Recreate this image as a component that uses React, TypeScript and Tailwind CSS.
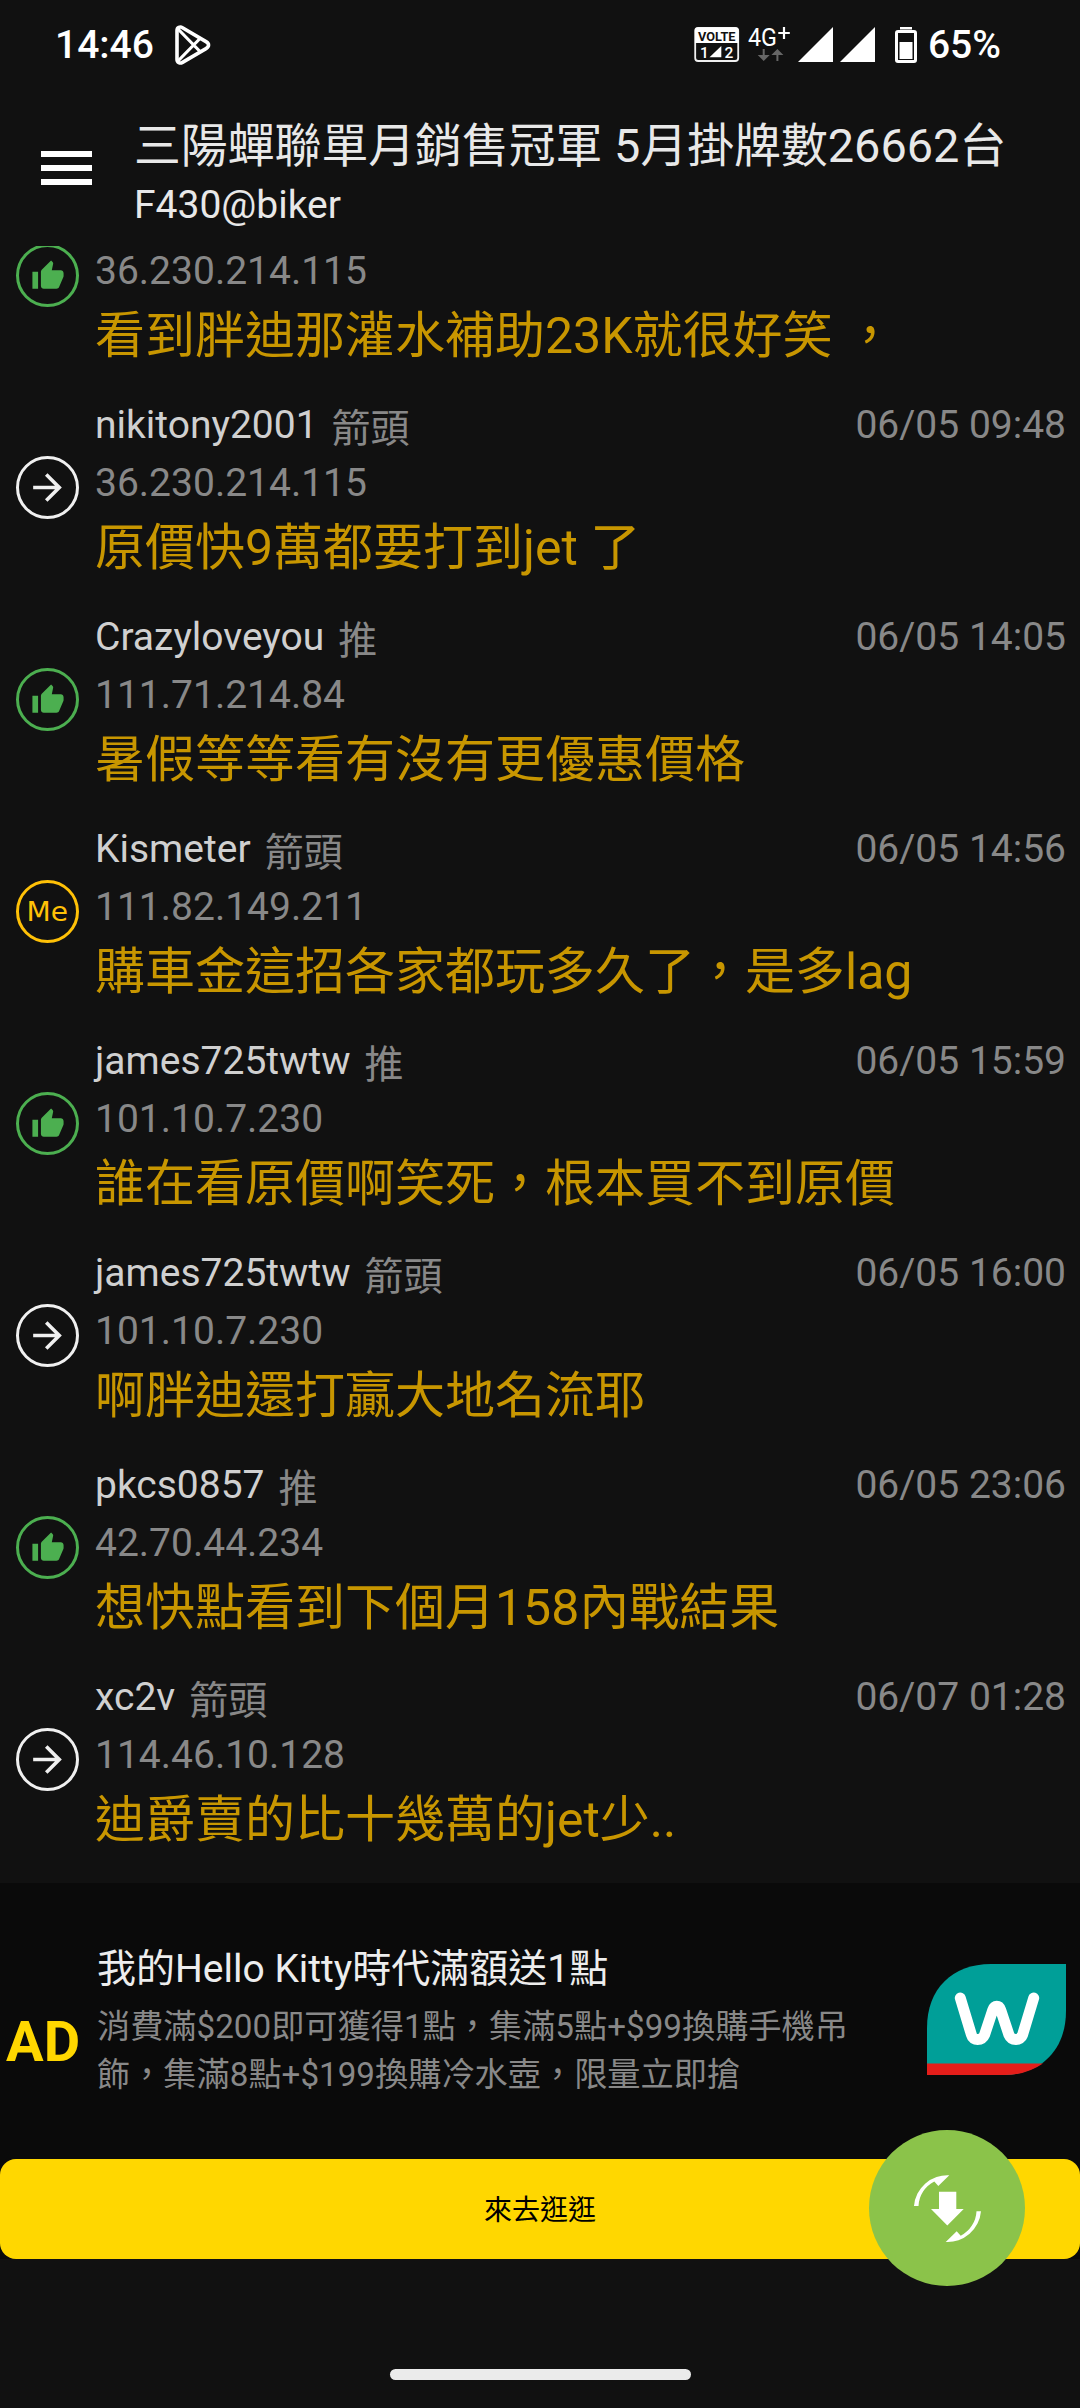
import { MdArrowForward, MdThumbUp } from 'react-icons/md';

type CommentType = 'push' | 'arrow' | 'me';

interface Comment {
  user: string;
  label: string;
  type: CommentType;
  ip: string;
  time: string;
  text: string;
}

const comments: Comment[] = [
  { user: 'nikitony2001', label: '推', type: 'push', ip: '36.230.214.115', time: '06/05 09:48', text: '看到胖迪那灌水補助23K就很好笑 ，' },
  { user: 'nikitony2001', label: '箭頭', type: 'arrow', ip: '36.230.214.115', time: '06/05 09:48', text: '原價快9萬都要打到jet 了' },
  { user: 'Crazyloveyou', label: '推', type: 'push', ip: '111.71.214.84', time: '06/05 14:05', text: '暑假等等看有沒有更優惠價格' },
  { user: 'Kismeter', label: '箭頭', type: 'me', ip: '111.82.149.211', time: '06/05 14:56', text: '購車金這招各家都玩多久了，是多lag' },
  { user: 'james725twtw', label: '推', type: 'push', ip: '101.10.7.230', time: '06/05 15:59', text: '誰在看原價啊笑死，根本買不到原價' },
  { user: 'james725twtw', label: '箭頭', type: 'arrow', ip: '101.10.7.230', time: '06/05 16:00', text: '啊胖迪還打贏大地名流耶' },
  { user: 'pkcs0857', label: '推', type: 'push', ip: '42.70.44.234', time: '06/05 23:06', text: '想快點看到下個月158內戰結果' },
  { user: 'xc2v', label: '箭頭', type: 'arrow', ip: '114.46.10.128', time: '06/07 01:28', text: '迪爵賣的比十幾萬的jet少..' },
];

function StatusBar() {
  return (
    <div className="flex h-[90px] items-center pl-[55px] pr-[79px] text-[39px] font-medium leading-[90px] text-white">
      <span>14:46</span>
      <svg className="ml-[20px]" width="38" height="40" viewBox="0 0 38 40" fill="none" stroke="white" strokeWidth="3.6" strokeLinejoin="round">
        <path d="M3 5.5C3 2.500 6 1.200 8.500 2.700L32 16.600C35.400 18.600 35.400 21.600 32 23.600L8.500 37.400C6 38.800 3 37.500 3 34.500Z" />
        <path d="M4 4L26.500 27M4 36L26.500 13" strokeWidth="3.2" />
      </svg>
      <div className="ml-auto flex items-center">
        <svg width="182" height="40" viewBox="695 25 182 40">
          <rect x="696.2" y="27.8" width="43" height="33.2" rx="3" fill="none" stroke="#f0f0f0" strokeWidth="1.8" />
          <path d="M696 30q0-2.500 2.500-2.500h38.500q2.500 0 2.500 2.500v13h-43.500z" fill="white" />
          <text x="699" y="40.500" fontSize="12" fontWeight="700" fill="#111" textLength="37.500" lengthAdjust="spacingAndGlyphs">VOLTE</text>
          <text x="701" y="57.500" fontSize="15.500" fill="white">1</text>
          <text x="725.500" y="57.500" fontSize="15.500" fill="white">2</text>
          <path d="M710.500 57.300L722.300 46v11.300z" fill="white" />
          <text x="749" y="46" fontSize="26.500" fontWeight="400" fill="white" textLength="29" lengthAdjust="spacingAndGlyphs">4G</text>
          <path d="M785 27v12M779.300 33h11.500" stroke="white" strokeWidth="2.200" />
          <path d="M763.700 49h2v6h5l-6 6-6-6h5zM777.400 61h2v-6h5l-6-6-6 6h5z" fill="#666" />
          <path d="M799 62L834 27v35zM841 62L876 27v35z" fill="white" />
        </svg>
        <svg className="ml-[19px]" width="22" height="40" viewBox="0 0 22 40">
          <path d="M5 2h12v2.500H5z" fill="white" />
          <rect x="1.500" y="6.500" width="19" height="30" rx="1.500" fill="none" stroke="white" strokeWidth="3" />
          <rect x="4.500" y="17" width="13" height="17" fill="white" />
        </svg>
        <span className="ml-[11px]">65%</span>
      </div>
    </div>
  );
}

function CommentIcon({ type }: { type: CommentType }) {
  if (type === 'push') {
    return (
      <div className="mt-[60px] flex size-[63px] shrink-0 items-center justify-center rounded-full border-3 border-[#4caf50] text-[#4caf50]">
        <MdThumbUp size={34} />
      </div>
    );
  }
  if (type === 'me') {
    return (
      <div className="mt-[60px] flex size-[63px] shrink-0 items-center justify-center rounded-full border-3 border-[#ffc107] font-['DejaVu_Sans',sans-serif] text-[26px] leading-none text-[#ffc107]">
        <span className="scale-x-108">Me</span>
      </div>
    );
  }
  return (
    <div className="mt-[60px] flex size-[63px] shrink-0 items-center justify-center rounded-full border-3 border-[#f0f0f0] text-[#f0f0f0]">
      <MdArrowForward size={43} />
    </div>
  );
}

function CommentRow({ comment }: { comment: Comment }) {
  return (
    <li className="flex h-[212px] shrink-0 pl-4 pr-[14px]">
      <CommentIcon type={comment.type} />
      <div className="ml-4 min-w-0 flex-1 whitespace-nowrap">
        <div className="flex text-[39px] leading-[58px]">
          <span className="text-[#d0d0d0]">{comment.user}</span>
          <span className="ml-[14px] mt-1 h-[54px] text-[#888]">{comment.label}</span>
          <span className="ml-auto text-[#888]">{comment.time}</span>
        </div>
        <p className="text-[39px] leading-[58px] text-[#888]">{comment.ip}</p>
        <p className="text-[50px] leading-[73px] text-[#c89600]">{comment.text}</p>
      </div>
    </li>
  );
}

function AdBanner() {
  return (
    <section className="bg-[#0a0a0a]">
      <div className="flex h-[276px]">
        <span className="w-[97px] pl-[6px] pt-[126px] text-[56px] font-bold leading-[66px] text-[#ffd700]">AD</span>
        <div className="w-[780px] pt-[58px]">
          <h2 className="text-[39px] leading-[56px] text-[#ededed]">我的Hello Kitty時代滿額送1點</h2>
          <p className="mt-[6px] text-[33.2px] leading-12 text-[#888]">
            消費滿$200即可獲得1點，集滿5點+$99換購手機吊
            <br />
            飾，集滿8點+$199換購冷水壺，限量立即搶
          </p>
        </div>
        <svg className="ml-auto mr-[14px] mt-[81px]" width="139" height="111" viewBox="0 0 139 111">
          <path d="M0 111V64C0 25 25 0 64 0H139V47C139 86 114 111 75 111Z" fill="#009f98" />
          <path d="M0 99.500H116Q99 111 78 111H0Z" fill="#e41e1a" />
          <path d="M33.300 34L44.500 71C46 77 55 77 57.500 71L65.800 46C67.500 41 72 41 73.700 46L82 71C84.500 77 93.500 77 95.500 71L106.700 34" fill="none" stroke="white" strokeWidth="11" strokeLinecap="round" strokeLinejoin="round" />
        </svg>
      </div>
      <button className="flex h-[100px] w-full items-center justify-center rounded-[16px] bg-[#ffd700] pt-1 text-[28px] text-black">
        來去逛逛
      </button>
    </section>
  );
}

export default function App() {
  return (
    <div className="relative flex h-[2408px] w-[1080px] flex-col overflow-hidden bg-[#111] font-[Roboto,'Noto_Sans_CJK_TC',sans-serif]">
      <StatusBar />

      {/* Header */}
      <header className="flex h-[156px] shrink-0 pl-[41px]">
        <div className="mt-[61px] flex w-[51px] flex-col gap-2">
          <span className="h-1.5 bg-white" />
          <span className="h-1.5 bg-white" />
          <span className="h-1.5 bg-white" />
        </div>
        <div className="ml-[42px] whitespace-nowrap pt-[22px] text-[#e8e8e8]">
          <h1 className="text-[46.85px] leading-[68px]">三陽蟬聯單月銷售冠軍 5月掛牌數26662台</h1>
          <p className="text-[39px] leading-[50px]">F430@biker</p>
        </div>
      </header>

      {/* Comments, scrolled so the first one is cut by the header */}
      <main className="h-[1637px] shrink-0 overflow-hidden">
        <ul className="-mt-[62px] flex flex-col">
          {comments.map((comment, i) => (
            <CommentRow key={i} comment={comment} />
          ))}
        </ul>
      </main>

      <AdBanner />

      <div className="mt-[110px] h-[11px] w-[301px] self-center rounded-full bg-[#ebebeb]" />

      {/* Refresh button */}
      <button className="absolute bottom-[122px] right-[55px] size-[156px] rounded-full bg-[#8bc34a]">
        <svg width="156" height="156" viewBox="0 0 156 156" fill="white">
          <path d="M45 76A33.500 33.500 0 0 1 80.300 45.300L69.300 56L65.300 51.500A29 29 0 0 0 49.500 76Z" />
          <path d="M45 76A33.500 33.500 0 0 1 80.300 45.300L69.300 56L65.300 51.500A29 29 0 0 0 49.500 76Z" transform="rotate(180 78.500 78.600)" />
          <path d="M70 61.700H87.300V79H94.700L78.300 95.500L62 79H70Z" />
        </svg>
      </button>
    </div>
  );
}
